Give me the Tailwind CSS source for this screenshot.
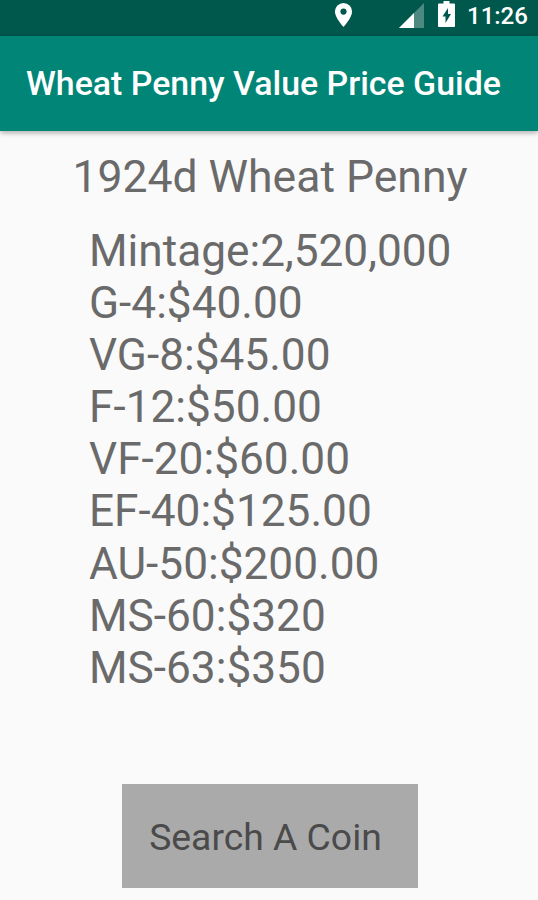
<!DOCTYPE html>
<html lang="en">
  <head>
    <meta charset="UTF-8" />
    <meta name="viewport" content="width=device-width, initial-scale=1.0" />
    <script src="https://cdn.jsdelivr.net/npm/@tailwindcss/browser@4"></script>
    <title>Wheat Penny Value Price Guide</title>
  </head>
  <body class="bg-[#fafafa] font-[Roboto,sans-serif] text-[#6a6a6a]">
    <div class="flex h-[900px] w-[538px] flex-col overflow-hidden">
      <!-- Status bar -->
      <div class="flex h-9 shrink-0 items-start bg-[#00574b] pl-[334px] text-white">
        <svg class="mt-[3px] h-[24px] w-[19px] shrink-0" viewBox="0 0 19 24" fill="currentColor">
          <path fill-rule="evenodd" d="M9.5 0A8.6 8.6 0 0 0 .9 8.600C.9 15 9.500 24 9.500 24s8.600-9 8.600-15.400A8.600 8.600 0 0 0 9.500 0zm0 5.500a3.100 3.100 0 1 1 0 6.200 3.100 3.100 0 0 1 0-6.200z" />
        </svg>
        <svg class="mt-[3px] ml-[46px] h-[25px] w-[25px] shrink-0" viewBox="0 0 25 25" fill="currentColor">
          <path d="M25 0v25H0z" opacity=".3" />
          <path d="M15 10v15H0z" />
        </svg>
        <svg class="mt-px ml-3.5 h-[26px] w-[17px] shrink-0" viewBox="0 0 17 26" fill="currentColor">
          <path fill-rule="evenodd" d="M5.500 0h6v2.500H16a1 1 0 0 1 1 1V25a1 1 0 0 1-1 1H1a1 1 0 0 1-1-1V3.500a1 1 0 0 1 1-1h4.500zM10 7l-5.500 8.500h3V22l5.500-9h-3z" />
        </svg>
        <span class="mt-0.5 ml-3 text-[24px] leading-7 font-medium">11:26</span>
      </div>

      <!-- App bar -->
      <header class="z-10 flex h-[95px] shrink-0 items-center bg-[#008577] pt-0.5 pl-[26px] shadow-[0_2px_5px_rgba(0,0,0,0.3)]">
        <h1 class="text-[33.9px] font-medium whitespace-nowrap text-white">Wheat Penny Value Price Guide</h1>
      </header>

      <main class="flex grow flex-col">
        <h2 class="mt-5 pl-0.5 text-center text-[44.5px] leading-[52px] whitespace-nowrap">1924d Wheat Penny</h2>
        <div class="mt-[22px] pl-[89px] text-[44.2px] leading-[52.1px]">
          <p>Mintage:2,520,000</p>
          <p>G-4:$40.00</p>
          <p>VG-8:$45.00</p>
          <p>F-12:$50.00</p>
          <p>VF-20:$60.00</p>
          <p>EF-40:$125.00</p>
          <p>AU-50:$200.00</p>
          <p>MS-60:$320</p>
          <p>MS-63:$350</p>
        </div>
        <button class="mt-auto mb-3 ml-[122px] h-[104px] w-[296px] bg-[#aaaaaa] pt-1 pr-[9px] text-[37.3px] text-[#4a4a4a]">Search A Coin</button>
      </main>
    </div>
  </body>
</html>
